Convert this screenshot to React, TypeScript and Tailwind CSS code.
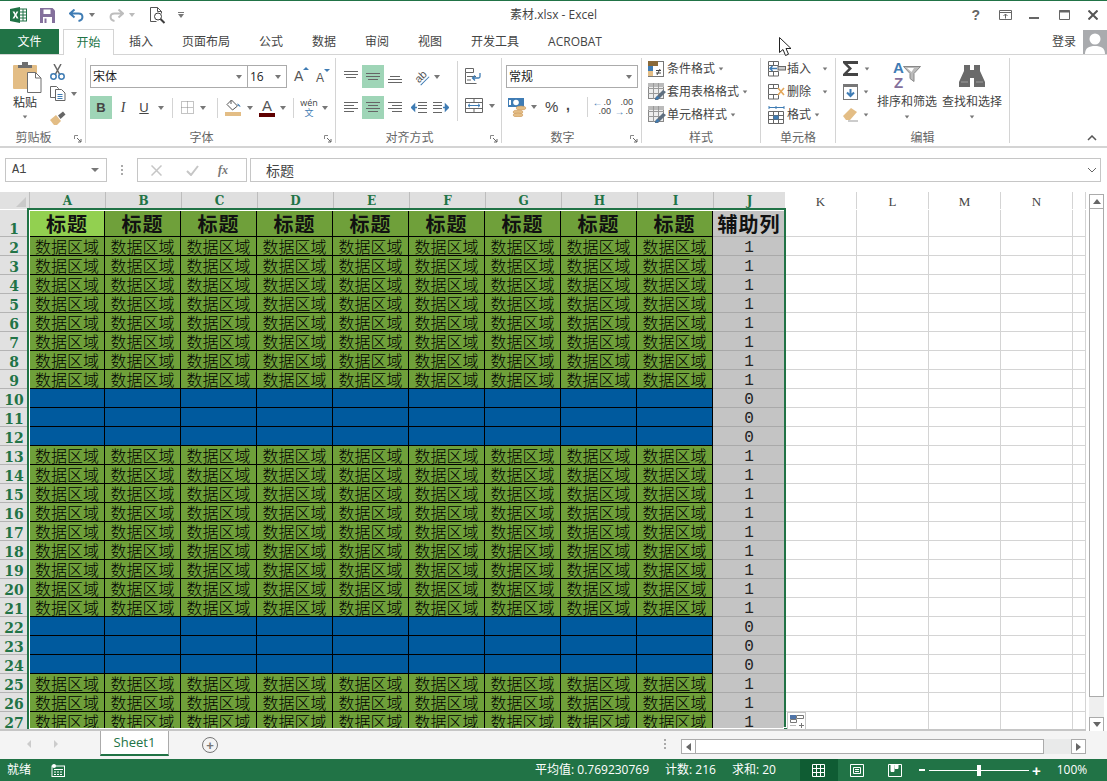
import { FC, ReactNode } from "react";

const Caret: FC<{ className?: string }> = ({ className = "" }) => (
  <span className={`inline-block w-0 h-0 border-x-[3.5px] border-t-[4px] border-x-transparent border-t-[#777] ${className}`} />
);

const Slot: FC<{ w: number; hl?: boolean; children?: ReactNode }> = ({ w, hl, children }) => (
  <div className={`h-[23px] flex items-center justify-center shrink-0 ${hl ? "bg-[#9fd5b7]" : ""}`} style={{ width: w }}>
    {children}
  </div>
);

const VSep: FC<{ ml?: string }> = ({ ml = "" }) => <div className={`w-px h-[20px] bg-[#d4d4d4] shrink-0 ${ml}`} />;

// horizontal text-align lines
const LinesL: FC<{ rows: [number, number, number][] }> = ({ rows }) => (
  <svg width="15" height="14" viewBox="0 0 15 14" stroke="#666" strokeWidth="1">
    {rows.map(([y, a, b], i) => (
      <line key={i} x1={a} x2={b} y1={y + 0.5} y2={y + 0.5} />
    ))}
  </svg>
);

const ExcelLogo = () => (
  <svg width="17" height="16" viewBox="0 0 17 16">
    <rect x="9" y="2" width="7.5" height="12" fill="#fff" stroke="#217346" />
    <path d="M10 5h6M10 8h6M10 11h6M13 2v12" stroke="#217346" strokeWidth="1" />
    <path d="M0 2 10 0v16L0 14z" fill="#217346" />
    <path d="M2.5 4.5h2l1 2.2 1-2.2h1.8L6.5 8l2 3.5H6.6l-1.1-2.3-1.1 2.3H2.5L4.6 8z" fill="#fff" />
  </svg>
);
const SaveIcon = () => (
  <svg width="15" height="15" viewBox="0 0 15 15">
    <path d="M0 0h12.5L15 2.5V15H0z" fill="#84709c" />
    <rect x="3.5" y="1.5" width="7" height="4.5" fill="#fff" />
    <rect x="3" y="9" width="9" height="6" fill="#fff" />
    <rect x="4.5" y="10.5" width="2" height="4.5" fill="#84709c" />
  </svg>
);
const UndoIcon: FC<{ color: string; flip?: boolean }> = ({ color, flip }) => (
  <svg width="15" height="13" viewBox="0 0 15 13" style={flip ? { transform: "scaleX(-1)" } : undefined}>
    <path d="M5.5 0.5 1 4.5l4.5 4M1.5 4.5h8c5 0 5.5 6.500 0 7.500" fill="none" stroke={color} strokeWidth="2" />
  </svg>
);
const PreviewIcon = () => (
  <svg width="16" height="17" viewBox="0 0 16 17" fill="none" stroke="#555">
    <path d="M.5.5h7l4 4v2M7.500.5v4h4M.5.5v14h6" />
    <circle cx="8" cy="9.500" r="3.500" stroke="#3d3d3d" />
    <path d="m10.500 12 4 4" strokeWidth="2" stroke="#3d3d3d" />
  </svg>
);

const PasteIcon = () => (
  <svg width="29" height="31" viewBox="0 0 29 31">
    <rect x="0" y="3" width="24" height="24" rx="1" fill="#e3bd85" />
    <path d="M5 6V3h4V0h6v3h4v3z" fill="#6e6e6e" />
    <path d="M14.500 10.500h8l5.500 5.500v14.500H14.500z" fill="#fff" stroke="#6e6e6e" />
    <path d="M22.500 10.500V16H28" fill="none" stroke="#6e6e6e" />
  </svg>
);
const CutIcon = () => (
  <svg width="15" height="16" viewBox="0 0 15 16" fill="none">
    <path d="M4 0l6 11M11 0 5 11" stroke="#666" strokeWidth="1.500" />
    <circle cx="3.500" cy="12.500" r="2.700" stroke="#3f7cb4" strokeWidth="1.500" />
    <circle cx="11.500" cy="12.500" r="2.700" stroke="#3f7cb4" strokeWidth="1.500" />
  </svg>
);
const CopyIcon = () => (
  <svg width="16" height="15" viewBox="0 0 16 15" fill="#fff" stroke="#666">
    <path d="M.5.5h6l2 2v9H.5z" />
    <path d="M5.500 3.500h6l3.500 3.500v7.500H5.500z" />
    <path d="M7.500 8.500h5M7.500 10.500h5M7.500 12.500h5" stroke="#3f7cb4" />
  </svg>
);
const BrushIcon = () => (
  <svg width="16" height="14" viewBox="0 0 16 14">
    <path d="M0 9 6 4l5 6-4 4H4z" fill="#e3bd85" />
    <path d="m8 4.500 5-4 2.500 3-5 4.500z" fill="#666" />
  </svg>
);
const BordersIcon = () => (
  <svg width="13" height="13" viewBox="0 0 13 13" stroke="#888" strokeDasharray="1 1" fill="none">
    <path d="M.5.5h12v12H.5zM6.500.5v12M.5 6.500h12" />
  </svg>
);
const FillIcon = () => (
  <svg width="17" height="17" viewBox="0 0 17 17">
    <path d="m6.500 1 6 6-5 4-5.500-5.500z" fill="#fff" stroke="#555" />
    <path d="M6 1.500V5" stroke="#555" />
    <path d="M12 4.500c2 .5 3.500 2 3.500 3.500L13.500 7z" fill="#3f7cb4" />
    <rect x="0" y="13" width="16" height="4" fill="#e3bd85" />
  </svg>
);
const IndentIcon: FC<{ flip?: boolean }> = ({ flip }) => (
  <svg width="16" height="11" viewBox="0 0 16 11" style={flip ? { transform: "scaleX(-1)" } : undefined}>
    <path d="M7 .5h9M7 3.500h9M7 6.500h9M7 10.500h9" stroke="#666" />
    <path d="M6 5.500H2M3.500 2.500l-3 3 3 3z" stroke="#3f7cb4" strokeWidth="1.500" fill="#3f7cb4" />
  </svg>
);
const WrapIcon = () => (
  <svg width="17" height="16" viewBox="0 0 17 16" fill="none">
    <path d="M.5.5h8v4h-8zM.5 4.500v11h11" stroke="#666" />
    <path d="M2 8.500h9M2 12h4" stroke="#666" />
    <path d="M15 5v3.500c0 1-.5 1.500-1.500 1.500H8M10 7.500 7.500 10l2.500 2.500" stroke="#3f7cb4" strokeWidth="1.300" />
  </svg>
);
const MergeIcon = () => (
  <svg width="18" height="15" viewBox="0 0 18 15" fill="none">
    <path d="M.5.500h17v14H.5zM.5 4.500h17M.5 10.500h17M9 .5v4M9 10.500v4" stroke="#666" />
    <path d="M3 7.500h12M5 5.800 3 7.500l2 1.700M13 5.800l2 1.700-2 1.700" stroke="#3f7cb4" />
  </svg>
);
const MoneyIcon = () => (
  <svg width="19" height="19" viewBox="0 0 19 19">
    <rect x="0" y="0" width="16" height="9" fill="#3f7cb4" />
    <circle cx="8" cy="4.500" r="2.800" fill="#fff" />
    <rect x="1" y="2" width="2" height="5" fill="#fff" />
    <ellipse cx="13" cy="10" rx="5" ry="2" fill="#e3bd85" stroke="#c9955a" strokeWidth=".5" />
    <ellipse cx="10" cy="14" rx="5" ry="2" fill="#e3bd85" stroke="#c9955a" strokeWidth=".5" />
    <ellipse cx="10" cy="17" rx="5" ry="2" fill="#e3bd85" stroke="#c9955a" strokeWidth=".5" />
  </svg>
);
const DecimalIcon: FC<{ more?: boolean }> = ({ more }) => (
  <div className="flex flex-col w-[18px] text-[9px] leading-[9px] font-['Liberation_Sans',sans-serif] text-[#444]">
    <div className="flex items-center justify-end gap-[1px]">
      {!more && <span className="text-[#3f7cb4] text-[10px] leading-[9px]">←</span>}
      <span>{more ? ".00" : ".0"}</span>
    </div>
    <div className="flex items-center justify-end gap-[1px]">
      {more && <span className="text-[#3f7cb4] text-[10px] leading-[9px]">→</span>}
      <span>{more ? ".0" : ".00"}</span>
    </div>
  </div>
);
const CondIcon = () => (
  <svg width="16" height="16" viewBox="0 0 16 16">
    <rect x=".5" y=".5" width="15" height="15" fill="#fff" stroke="#777" />
    <rect x="0" y="0" width="10" height="5" fill="#8a6a3a" />
    <rect x="0" y="5" width="5" height="5" fill="#3f7cb4" />
    <rect x="0" y="10" width="5" height="5" fill="#e3bd85" />
    <path d="M8 9.500h5M8 12h5M12 8l-3 6" stroke="#444" />
  </svg>
);
const TableIcon = () => (
  <svg width="18" height="17" viewBox="0 0 18 17">
    <rect x=".5" y=".5" width="15" height="15" fill="#eee" stroke="#888" />
    <rect x="0" y="0" width="16" height="4" fill="#bbb" />
    <path d="M5.500 0v16M10.500 0v16M0 5.500h16M0 10.500h16" stroke="#999" />
    <path d="m7 15 8-8 3 2-8 8H7z" fill="#5f6f7f" />
    <path d="m7 17 2-4 3 2z" fill="#3f7cb4" />
  </svg>
);
const CellInsert = () => (
  <svg width="18" height="16" viewBox="0 0 18 16" fill="none" stroke="#666">
    <path d="M.5.500h10v4H.5zM5.500.5v4M.5 10.500h10v4.500H.5zM5.500 10.500V15M.5 4.500v6" />
    <rect x="10" y="5.500" width="7.500" height="3.500" fill="#ccc" />
    <path d="M9 7.500H2M4.500 5 2 7.500 4.500 10" stroke="#3f7cb4" strokeWidth="1.500" />
  </svg>
);
const CellDelete = () => (
  <svg width="18" height="16" viewBox="0 0 18 16" fill="none" stroke="#666">
    <path d="M.5.500h10v4H.5zM5.500.5v4M.5 10.500h10v4.500H.5zM5.500 10.500V15M.5 4.500v6" />
    <path d="m10 4 6 7M16 4l-6 7" stroke="#e3a75a" strokeWidth="1.600" />
  </svg>
);
const CellFormat = () => (
  <svg width="17" height="18" viewBox="0 0 17 18" fill="none">
    <path d="M1 1.500h15M1 0v3M8 0v3M16 0v3" stroke="#3f7cb4" />
    <path d="M.5 5.500h15v12H.5zM5.500 5.500v12M10.500 5.500v12M.5 9.500h15M.5 13.500h15" stroke="#666" />
    <rect x="5.500" y="9.500" width="5" height="4" fill="#3f7cb4" />
  </svg>
);
const SumIcon = () => (
  <svg width="16" height="15" viewBox="0 0 16 15">
    <path d="M0 0h15v3H4.500L9 7.500 4.500 12H15v3H0v-2l5.500-5.500L0 2z" fill="#444" />
  </svg>
);
const FillDown = () => (
  <svg width="15" height="16" viewBox="0 0 15 16">
    <rect x=".5" y=".5" width="14" height="15" fill="#fff" stroke="#777" />
    <rect x="0" y="0" width="15" height="3" fill="#777" />
    <path d="M7.500 5v7M4 8.500l3.500 3.500L11 8.500" fill="none" stroke="#3f7cb4" strokeWidth="2" />
  </svg>
);
const Eraser = () => (
  <svg width="15" height="14" viewBox="0 0 15 14">
    <path d="M0 8 8 0l6 4-7 8H3z" fill="#e3bd85" />
    <path d="M5 13h10" stroke="#999" />
  </svg>
);
const Funnel = () => (
  <svg width="18" height="16" viewBox="0 0 18 16">
    <path d="M.5.5h17L11 7.500v8l-4-3V7.500z" fill="#bbb" stroke="#888" />
    <path d="M4 2h7L8.500 6z" fill="#fff" />
  </svg>
);
const Binoculars = () => (
  <svg width="26" height="24" viewBox="0 0 26 24" fill="#6a6a6a">
    <path d="M5 2h6v5h4V2h6v6l5 11v5H15v-9h-4v9H0v-5L5 8z" />
    <path d="M2 19h7M17 19h7" stroke="#fff" strokeOpacity=".35" />
  </svg>
);
const Launcher = () => (
  <svg width="8" height="8" viewBox="0 0 8 8" fill="none" className="absolute right-[3px] bottom-[0px]">
    <path d="M.5 4V.5H4" stroke="#888" />
    <path d="M3 3l4 4M7 4v3H4" stroke="#666" />
  </svg>
);

const Group: FC<{ w: number; label: string; launcher?: boolean; children: ReactNode }> = ({ w, label, launcher, children }) => (
  <div className="relative h-full flex flex-col shrink-0 border-r border-[#d4d4d4]" style={{ width: w }}>
    <div className="flex-1 min-h-0">{children}</div>
    <div className={`h-[16px] leading-[16px] text-center text-[12px] text-[#666] translate-y-[3px] ${launcher ? "pr-[18px]" : ""}`}>{label}</div>
    {launcher && <Launcher />}
  </div>
);

const StyleRow: FC<{ icon: ReactNode; label: string }> = ({ icon, label }) => (
  <div className="h-[23px] flex items-center">
    <div className="w-[19px] shrink-0 flex items-center">{icon}</div>
    <span className="text-[12px] text-[#444] whitespace-nowrap">{label}</span>
    <Caret className="ml-[3px] scale-75" />
  </div>
);

const CellRow: FC<{ icon: ReactNode; label: string; pad: string }> = ({ icon, label, pad }) => (
  <div className="h-[23px] flex items-center">
    <div className="w-[19px] shrink-0 flex items-center">{icon}</div>
    <span className="text-[12px] text-[#444]">{label}</span>
    <Caret className={`scale-75 ${pad}`} />
  </div>
);

const Combo: FC<{ w: number; text: string }> = ({ w, text }) => (
  <div className="h-[23px] border border-[#ababab] flex items-center justify-between pl-[2px] pr-[5px] shrink-0 text-[12px] text-[#222] bg-white" style={{ width: w }}>
    <span>{text}</span>
    <Caret />
  </div>
);

const tabs = ["插入", "页面布局", "公式", "数据", "审阅", "视图", "开发工具", "ACROBAT"];
const cols = ["A", "B", "C", "D", "E", "F", "G", "H", "I"];
const emptyCols = [72, 72, 72, 72, 13];

const rowKind = (n: number) => ((n >= 10 && n <= 12) || (n >= 22 && n <= 24) ? "blue" : "data");
const rowNums = Array.from({ length: 26 }, (_, i) => i + 2);

const SheetRow: FC<{ n: number }> = ({ n }) => {
  const blue = rowKind(n) === "blue";
  return (
    <div className="flex h-[19px] shrink-0">
      <div className="w-[28px] shrink-0 mr-[2px] bg-[#e1e1e1] border-b border-[#b4b4b4] flex items-end justify-center font-['DejaVu_Serif',serif] font-bold text-[14px] leading-[14px] text-[#217346]">
        {n}
      </div>
      {cols.map((c, i) => (
        <div
          key={c}
          className={`shrink-0 border-r border-b border-black flex items-center justify-center text-[16px] leading-[19px] text-black font-light font-['Noto_Sans_CJK_SC',sans-serif] whitespace-nowrap ${blue ? "bg-[#005a9e]" : "bg-[#6fa03a]"}`}
          style={{ width: i === 0 ? 75 : 76 }}
        >
          {blue ? "" : "数据区域"}
        </div>
      ))}
      <div className="w-[72px] shrink-0 bg-[#c4c4c4] border-b border-[#a9a9a9] flex items-center justify-center pt-[3px] font-['Liberation_Mono',monospace] text-[16px] leading-[16px] text-[#222]">
        {blue ? 0 : 1}
      </div>
      {emptyCols.map((w, i) => (
        <div key={i} className="shrink-0 border-r border-b border-[#d4d4d4] bg-white" style={{ width: w }} />
      ))}
    </div>
  );
};

const ScrollBtn: FC<{ dir: "up" | "down" | "left" | "right" }> = ({ dir }) => {
  const cls = {
    up: "border-x-[4px] border-b-[5px] border-x-transparent border-b-[#666]",
    down: "border-x-[4px] border-t-[5px] border-x-transparent border-t-[#666]",
    left: "border-y-[4px] border-r-[5px] border-y-transparent border-r-[#666]",
    right: "border-y-[4px] border-l-[5px] border-y-transparent border-l-[#666]",
  }[dir];
  return (
    <div className="w-[15px] h-[15px] shrink-0 bg-white border border-[#ababab] flex items-center justify-center">
      <span className={`w-0 h-0 ${cls}`} />
    </div>
  );
};

const App: FC = () => {
  return (
    <div className="relative w-[1107px] h-[781px] overflow-hidden bg-white flex flex-col font-['Open_Sans','Noto_Sans_CJK_SC',sans-serif] text-[#444]">
      {/* title bar */}
      <div className="h-[29px] shrink-0 border-t border-[#217346] grid grid-cols-[1fr_auto_1fr] items-center">
        <div className="flex items-center pl-[10px]">
          <ExcelLogo />
          <div className="ml-[13px]"><SaveIcon /></div>
          <div className="ml-[14px]"><UndoIcon color="#3f7cb4" /></div>
          <Caret className="ml-[5px]" />
          <div className="ml-[14px]"><UndoIcon color="#bdbdbd" flip /></div>
          <Caret className="ml-[5px] opacity-50" />
          <div className="ml-[15px]"><PreviewIcon /></div>
          <div className="ml-[12px] flex flex-col items-center gap-[1px]">
            <span className="w-[6px] h-px bg-[#777]" />
            <Caret />
          </div>
        </div>
        <div className="text-[12px] text-[#444] whitespace-nowrap">素材.xlsx - Excel</div>
        <div className="flex items-center justify-end pr-[9px]">
          <span className="text-[14px] font-bold text-[#666] font-['Liberation_Sans',sans-serif] mr-[19px]">?</span>
          <svg width="13" height="10" viewBox="0 0 13 10" fill="none" stroke="#666" className="mr-[17px]">
            <path d="M.5.500h12v9H.5zM.5 2.500h12M6.500 8.500V4M4.500 6l2-2 2 2" />
          </svg>
          <span className="w-[10px] h-[2px] bg-[#666] mr-[20px] translate-y-[3px]" />
          <svg width="11" height="10" viewBox="0 0 11 10" fill="none" stroke="#666" className="mr-[18px]">
            <path d="M.5.500h10v9H.5z" />
            <path d="M0 1.500h11" strokeWidth="2" />
          </svg>
          <svg width="10" height="10" viewBox="0 0 10 10" stroke="#555" strokeWidth="2">
            <path d="m.5.500 9 9M9.500.5l-9 9" />
          </svg>
        </div>
      </div>

      {/* tabs */}
      <div className="h-[25px] shrink-0 flex items-stretch text-[12px] relative">
        <div className="w-[59px] bg-[#217346] text-white flex items-center justify-center">文件</div>
        <div className="ml-[4px] w-[51px] border border-b-0 border-[#d4d4d4] bg-white text-[#217346] flex items-center justify-center z-10 -mb-[1px]">开始</div>
        <div className="flex items-center pl-[15px] gap-[29px] whitespace-nowrap flex-1">
          {tabs.map((t) => (
            <span key={t}>{t}</span>
          ))}
        </div>
        <div className="flex items-center">
          <span className="mr-[7px] text-[#444]">登录</span>
          <div className="w-[24px] h-[24px] bg-[#a9abae] overflow-hidden">
            <svg width="24" height="24" viewBox="0 0 24 24" fill="#fff">
              <circle cx="12" cy="9" r="5.500" />
              <path d="M2 24c0-6 4-8 10-8s10 2 10 8z" />
            </svg>
          </div>
        </div>
      </div>

      {/* ribbon */}
      <div className="h-[94px] shrink-0 border-t border-b-2 border-[#d4d4d4] flex pt-[3px] pb-[3px] relative">
        <Group w={86} label="剪贴板" launcher>
          <div className="flex pl-[13px]">
            <div className="w-[24px] flex flex-col items-center pt-[4px]">
              <div className="self-start"><PasteIcon /></div>
              <span className="text-[12px] text-[#333] whitespace-nowrap leading-[18px] mt-[1px]">粘贴</span>
              <Caret className="mt-[3px] scale-75" />
            </div>
            <div className="ml-[13px] flex flex-col pt-[2px]">
              <div className="h-[23px] flex items-center"><CutIcon /></div>
              <div className="h-[23px] flex items-center mt-[-1px]"><CopyIcon /><Caret className="ml-[5px]" /></div>
              <div className="h-[23px] flex items-center mt-[1px]"><BrushIcon /></div>
            </div>
          </div>
        </Group>

        <Group w={250} label="字体" launcher>
          <div className="pl-[4px] pt-[7px] flex flex-col gap-[8px]">
            <div className="flex items-center">
              <Combo w={158} text="宋体" />
              <div className="-ml-px"><Combo w={40} text="16" /></div>
              <div className="ml-[7px] flex items-start w-[20px] relative text-[#555] font-['Liberation_Sans',sans-serif] text-[14px]">
                A<span className="w-0 h-0 border-x-[3px] border-b-[3px] border-x-transparent border-b-[#3f7cb4] mt-[1px]" />
              </div>
              <div className="ml-[3px] flex items-start w-[20px] text-[#555] font-['Liberation_Sans',sans-serif] text-[12px] pt-[2px]">
                A<span className="w-0 h-0 border-x-[3px] border-t-[3px] border-x-transparent border-t-[#3f7cb4]" />
              </div>
            </div>
            <div className="flex items-center text-[#444]">
              <Slot w={22} hl><span className="font-bold text-[13px] font-['Liberation_Sans',sans-serif]">B</span></Slot>
              <Slot w={22}><span className="italic text-[14px] font-['Liberation_Serif',serif]">I</span></Slot>
              <Slot w={20}><span className="underline text-[13px] font-['Liberation_Sans',sans-serif]">U</span></Slot>
              <Slot w={14}><Caret /></Slot>
              <VSep ml="ml-[4px]" />
              <div className="ml-[8px]"><BordersIcon /></div>
              <Slot w={18}><Caret /></Slot>
              <VSep ml="ml-[5px]" />
              <div className="ml-[7px]"><FillIcon /></div>
              <Slot w={15}><Caret /></Slot>
              <div className="ml-[2px] w-[16px] flex flex-col items-center">
                <span className="text-[15px] leading-[13px] text-[#555] font-['Liberation_Sans',sans-serif]">A</span>
                <span className="w-[16px] h-[4px] bg-[#5f0000] mt-[1px]" />
              </div>
              <Slot w={15}><Caret /></Slot>
              <VSep ml="ml-[3px]" />
              <div className="ml-[7px] w-[16px] flex flex-col items-center">
                <span className="text-[9px] text-[#444] leading-[9px] h-[9px]">wén</span>
                <span className="text-[9px] text-[#3f7cb4] leading-[9px] h-[9px] mt-[1px]">文</span>
              </div>
              <Slot w={15}><Caret /></Slot>
            </div>
          </div>
        </Group>

        <Group w={166} label="对齐方式" launcher>
          <div className="flex h-full">
            <div className="w-[121px] shrink-0 pl-[4px] pt-[7px] flex flex-col gap-[8px]">
              <div className="flex items-center">
                <Slot w={22}><LinesL rows={[[1, 0, 14], [4, 0, 14], [7, 2, 12]]} /></Slot>
                <Slot w={22} hl><LinesL rows={[[3, 0, 14], [6, 0, 14], [9, 2, 12]]} /></Slot>
                <Slot w={22}><LinesL rows={[[6, 2, 12], [9, 0, 14], [12, 0, 14]]} /></Slot>
                <div className="w-[26px] ml-[2px] h-[23px] flex items-center justify-center">
                  <span className="text-[11px] -rotate-45 text-[#555] font-['Liberation_Sans',sans-serif] leading-[11px] border-b border-[#3f7cb4]">ab</span>
                </div>
                <Caret />
              </div>
              <div className="flex items-center">
                <Slot w={22}><LinesL rows={[[1, 0, 14], [4, 0, 10], [7, 0, 14], [10, 0, 10]]} /></Slot>
                <Slot w={22} hl><LinesL rows={[[1, 0, 14], [4, 2, 12], [7, 0, 14], [10, 2, 12]]} /></Slot>
                <Slot w={22}><LinesL rows={[[1, 0, 14], [4, 4, 14], [7, 0, 14], [10, 4, 14]]} /></Slot>
                <div className="w-[22px] ml-[2px] flex justify-center"><IndentIcon /></div>
                <div className="w-[22px] flex justify-center"><IndentIcon flip /></div>
              </div>
            </div>
            <div className="h-[60px] w-px bg-[#d4d4d4] mt-[3px] shrink-0" />
            <div className="pl-[7px] pt-[10px] flex flex-col">
              <WrapIcon />
              <div className="flex items-center mt-[14px]">
                <MergeIcon />
                <Caret className="ml-[6px]" />
              </div>
            </div>
          </div>
        </Group>

        <Group w={140} label="数字" launcher>
          <div className="pl-[4px] pt-[7px] flex flex-col gap-[8px]">
            <Combo w={132} text="常规" />
            <div className="flex items-center">
              <div className="ml-[2px]"><MoneyIcon /></div>
              <Caret className="ml-[4px]" />
              <span className="ml-[8px] text-[15px] font-['Liberation_Sans',sans-serif] w-[16px]">%</span>
              <span className="ml-[5px] font-bold text-[14px] font-['Liberation_Sans',sans-serif] w-[8px] -mt-[4px]">,</span>
              <VSep ml="ml-[13px]" />
              <div className="ml-[5px]"><DecimalIcon /></div>
              <div className="ml-[4px]"><DecimalIcon more /></div>
            </div>
          </div>
        </Group>

        <Group w={119} label="样式">
          <div className="pl-[6px] -mt-[1px]">
            <StyleRow icon={<CondIcon />} label="条件格式" />
            <StyleRow icon={<TableIcon />} label="套用表格格式" />
            <StyleRow icon={<TableIcon />} label="单元格样式" />
          </div>
        </Group>

        <Group w={75} label="单元格">
          <div className="pl-[7px] -mt-[1px]">
            <CellRow icon={<CellInsert />} label="插入" pad="ml-[11px]" />
            <CellRow icon={<CellDelete />} label="删除" pad="ml-[11px]" />
            <CellRow icon={<CellFormat />} label="格式" pad="ml-[3px]" />
          </div>
        </Group>

        <Group w={174} label="编辑">
          <div className="flex pl-[7px]">
            <div className="-mt-[1px] w-[34px]">
              <div className="h-[23px] flex items-center"><SumIcon /><Caret className="ml-[5px] scale-75" /></div>
              <div className="h-[23px] flex items-center"><FillDown /><Caret className="ml-[5px] scale-75" /></div>
              <div className="h-[23px] flex items-center"><Eraser /><Caret className="ml-[5px] scale-75" /></div>
            </div>
            <div className="w-[60px] flex flex-col items-center">
              <div className="h-[34px] flex items-center">
                <div className="flex flex-col items-center font-['Liberation_Sans',sans-serif] font-bold text-[15px] leading-[15px]">
                  <span className="text-[#3f7cb4]">A</span>
                  <span className="text-[#84709c]">Z</span>
                </div>
                <div className="-ml-[1px] mt-[-2px]"><Funnel /></div>
              </div>
              <span className="text-[12px] leading-[18px] mt-[1px] whitespace-nowrap">排序和筛选</span>
              <Caret className="mt-[4px] scale-75" />
            </div>
            <div className="ml-[5px] w-[60px] flex flex-col items-center">
              <div className="h-[34px] flex items-center"><Binoculars /></div>
              <span className="text-[12px] leading-[18px] mt-[1px] whitespace-nowrap">查找和选择</span>
              <Caret className="mt-[4px] scale-75" />
            </div>
          </div>
        </Group>
        <svg width="10" height="6" viewBox="0 0 10 6" fill="none" stroke="#555" strokeWidth="1.500" className="absolute right-[10px] bottom-[5px]">
          <path d="m1 5 4-4 4 4" />
        </svg>
      </div>

      {/* formula bar */}
      <div className="h-[24px] shrink-0 mt-[10px] flex items-stretch pl-[5px] pr-[6px]">
        <div className="w-[102px] border border-[#c6c6c6] flex items-center justify-between pl-[6px] pr-[7px]">
          <span className="font-['Liberation_Mono',monospace] text-[12px] text-[#444]">A1</span>
          <span className="w-0 h-0 border-x-[4px] border-t-[4px] border-x-transparent border-t-[#777]" />
        </div>
        <div className="w-[30px] flex flex-col items-center justify-center gap-[2px]">
          <span className="w-[2px] h-[2px] bg-[#aaa]" />
          <span className="w-[2px] h-[2px] bg-[#aaa]" />
          <span className="w-[2px] h-[2px] bg-[#aaa]" />
        </div>
        <div className="w-[110px] border border-[#c6c6c6] flex items-center pl-[13px]">
          <svg width="11" height="11" viewBox="0 0 11 11" stroke="#c6c6c6" strokeWidth="1.500"><path d="m.5.500 10 10M10.500.5l-10 10" /></svg>
          <svg width="13" height="11" viewBox="0 0 13 11" fill="none" stroke="#c6c6c6" strokeWidth="2" className="ml-[24px]"><path d="m1 6 4 4 7-9" /></svg>
          <span className="ml-[19px] italic font-bold text-[12px] text-[#777] font-['Liberation_Serif',serif]">fx</span>
        </div>
        <div className="ml-[3px] flex-1 border border-[#c6c6c6] flex items-center justify-between pl-[15px] pr-[3px]">
          <span className="text-[14px] text-[#444]">标题</span>
          <svg width="10" height="6" viewBox="0 0 10 6" fill="none" stroke="#666"><path d="m1 1 4 4 4-4" /></svg>
        </div>
      </div>

      {/* sheet + vertical scrollbar */}
      <div className="h-[539px] shrink-0 mt-[10px] flex">
        <div className="relative w-[1086px] overflow-hidden flex flex-col shrink-0 border-b-2 border-[#c6c6c6]">
          <div className="flex h-[17px] shrink-0">
            <div className="w-[29px] shrink-0 bg-[#e1e1e1] relative overflow-hidden">
              <svg width="10" height="10" viewBox="0 0 10 10" className="absolute right-[3px] bottom-[2px]"><path d="M10 0v10H0z" fill="#c9c9c9" /></svg>
            </div>
            {cols.concat("J").map((c, i) => (
              <div
                key={c}
                className="shrink-0 bg-[#dfdfdf] border-l border-[#bdbdbd] flex items-end justify-center font-['DejaVu_Serif',serif] font-bold text-[12px] leading-[15px] text-[#217346]"
                style={{ width: i === 9 ? 72 : 76 }}
              >
                {c}
              </div>
            ))}
            {["K", "L", "M", "N", ""].map((c, i) => (
              <div
                key={i}
                className="shrink-0 border-r border-[#d4d4d4] flex items-end justify-center font-['Liberation_Serif',serif] text-[13px] leading-[15px] text-[#444]"
                style={{ width: emptyCols[i] }}
              >
                {c}
              </div>
            ))}
          </div>
          <div className="flex h-[27px] shrink-0 mt-[1px]">
            <div className="w-[28px] shrink-0 mr-[2px] bg-[#e1e1e1] border-b border-[#b4b4b4] flex items-end justify-center font-['DejaVu_Serif',serif] font-bold text-[14px] leading-[14px] text-[#217346]">
              1
            </div>
            {cols.map((c, i) => (
              <div
                key={c}
                className={`shrink-0 border-r border-b border-black flex items-center justify-center pt-[1px] text-[20px] leading-[26px] tracking-[1px] font-bold text-[#111] font-['Noto_Sans_CJK_SC',sans-serif] ${i === 0 ? "bg-[#92d050]" : "bg-[#6fa03a]"}`}
                style={{ width: i === 0 ? 75 : 76 }}
              >
                标题
              </div>
            ))}
            <div className="w-[72px] shrink-0 bg-[#c4c4c4] border-b border-[#a9a9a9] flex items-center justify-center pt-[1px] text-[20px] leading-[26px] tracking-[1px] font-bold text-[#111] font-['Noto_Sans_CJK_SC',sans-serif] whitespace-nowrap">
              辅助列
            </div>
            {emptyCols.map((w, i) => (
              <div key={i} className="shrink-0 border-r border-b border-[#d4d4d4] bg-white" style={{ width: w }} />
            ))}
          </div>
          {rowNums.map((n) => (
            <SheetRow key={n} n={n} />
          ))}

          {/* selection outline */}
          <div className="absolute left-[27px] top-[16px] w-[759px] h-[523px] border-2 border-[#217346] pointer-events-none">
            <div className="w-full h-full border-l border-t border-b border-white" />
          </div>
          <div className="absolute left-[783px] top-[535px] w-[5px] h-[4px] bg-[#217346] border border-white" />
          {/* paste options */}
          <div className="absolute left-[787px] top-[520px] w-[19px] h-[18px] bg-white border border-[#c6c6c6] flex items-center justify-center">
            <svg width="14" height="13" viewBox="0 0 14 13" fill="none" stroke="#777">
              <path d="M6.500.500h7v3h-7z" />
              <rect x="0" y="0" width="6" height="4" fill="#4f74a8" stroke="none" />
              <path d="M.5 4.500h6v3h-6z" />
              <path d="M.5 10.500h6" strokeDasharray="1 1" />
              <path d="M9 10.500h5M11.500 8v5" />
            </svg>
          </div>
        </div>
        <div className="flex-1 pl-[3px] pt-[2px] flex flex-col w-[15px]">
          <ScrollBtn dir="up" />
          <div className="w-[15px] h-[488px] bg-white border border-[#ababab] border-t-0 shrink-0" />
          <div className="w-[15px] h-[20px] bg-[#efefef] shrink-0" />
          <ScrollBtn dir="down" />
        </div>
      </div>

      {/* sheet tabs */}
      <div className="flex-1 bg-[#f4f4f4] flex items-start relative">
        <div className="w-[100px] h-[26px] flex items-center pl-[27px] gap-[23px] shrink-0">
          <span className="w-0 h-0 border-y-[4px] border-r-[4px] border-y-transparent border-r-[#ccc]" />
          <span className="w-0 h-0 border-y-[4px] border-l-[4px] border-y-transparent border-l-[#ccc]" />
        </div>
        <div className="w-[69px] h-[25px] shrink-0 bg-white border-x border-[#ababab] border-b-2 border-b-[#217346] flex items-center justify-center text-[13px] text-[#217346]">
          Sheet1
        </div>
        <div className="ml-[33px] mt-[6px] w-[16px] h-[16px] rounded-full border border-[#777] flex items-center justify-center text-[#777] font-bold text-[13px] leading-[13px] font-['Liberation_Sans',sans-serif]">
          +
        </div>
        <div className="ml-[446px] mt-[8px] flex flex-col gap-[2px]">
          <span className="w-[2px] h-[2px] bg-[#aaa]" />
          <span className="w-[2px] h-[2px] bg-[#aaa]" />
          <span className="w-[2px] h-[2px] bg-[#aaa]" />
        </div>
        <div className="ml-[15px] mt-[8px] flex items-center w-[405px]">
          <ScrollBtn dir="left" />
          <div className="w-[348px] h-[15px] bg-white border-y border-r border-[#ababab]" />
          <div className="w-[27px] h-[15px] bg-[#e9eaea]" />
          <ScrollBtn dir="right" />
        </div>
      </div>

      {/* status bar */}
      <div className="h-[22px] shrink-0 bg-[#217346] text-white text-[12px] flex items-center pl-[7px] whitespace-nowrap">
        <span>就绪</span>
        <svg width="14" height="13" viewBox="0 0 14 13" fill="#fff" className="ml-[20px]">
          <rect x="1" y="2" width="12.500" height="10.500" fill="none" stroke="#fff" />
          <path d="M3 5h9v1H3zM3 7.500h2v1H3zM6 7.500h2v1H6zM9 7.500h2v1H9zM3 10h2v1H3zM6 10h2v1H6zM9 10h2v1H9z" />
          <circle cx="3" cy="2" r="2" />
        </svg>
        <span className="ml-[470px]">平均值: 0.769230769</span>
        <span className="ml-[16px]">计数: 216</span>
        <span className="ml-[16px]">求和: 20</span>
        <div className="ml-[24px] w-[38px] h-full bg-[#0f5c33] flex items-center justify-center">
          <svg width="13" height="13" viewBox="0 0 13 13" fill="none" stroke="#fff"><path d="M.5.500h12v12H.5zM4.500.5v12M8.500.5v12M.5 4.500h12M.5 8.500h12" /></svg>
        </div>
        <svg width="14" height="13" viewBox="0 0 14 13" fill="none" stroke="#fff" className="ml-[12px]"><path d="M.5.500h13v12H.5zM3.500 3.500h7v6h-7zM5 5.500h4M5 7.500h4" /></svg>
        <svg width="14" height="13" viewBox="0 0 14 13" stroke="#fff" className="ml-[24px]"><path d="M.5.500h13v12H.5z" fill="none" /><path d="M3 .5h3v7H3zM7 .5h3v4H7z" fill="#fff" /></svg>
        <span className="ml-[17px] w-[6px] h-[2px] bg-white" />
        <div className="ml-[4px] w-[100px] h-px bg-white relative">
          <span className="absolute left-[48px] -top-[5px] w-[4px] h-[11px] bg-white" />
        </div>
        <span className="ml-[3px] text-[15px] font-bold leading-[15px] font-['Liberation_Sans',sans-serif]">+</span>
        <span className="ml-[16px]">100%</span>
      </div>

      {/* mouse cursor */}
      <svg width="14" height="20" viewBox="0 0 14 20" className="absolute left-[779px] top-[37px]">
        <path d="M.5.500v15l3.500-3 2.500 6 3-1.300-2.500-5.700h5z" fill="#fff" stroke="#222" />
      </svg>
    </div>
  );
};

export default App;
